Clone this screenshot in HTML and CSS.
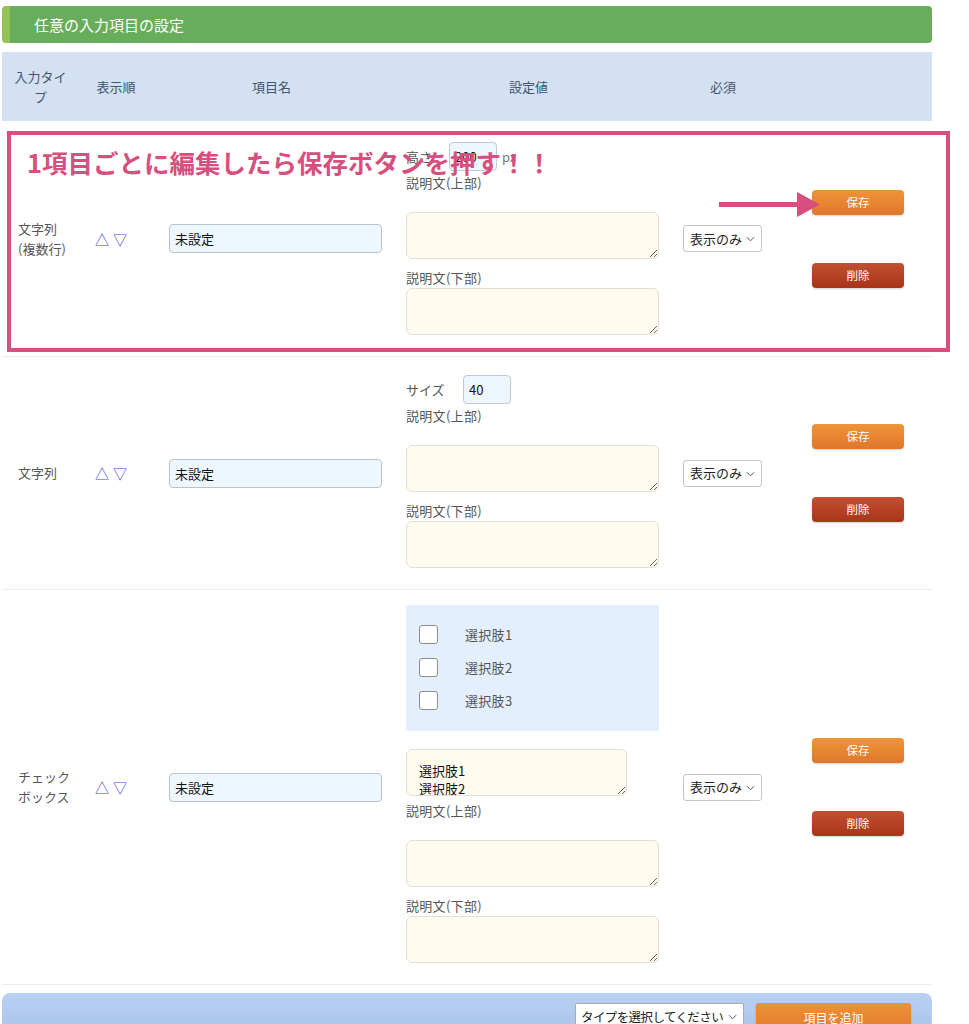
FILE: index.html
```html
<!DOCTYPE html>
<html lang="ja">
<head>
<meta charset="utf-8">
<title>任意の入力項目の設定</title>
<link rel="stylesheet" href="styles.css">
</head>
<body>
<div class="page">
  <h2 class="panel-title">任意の入力項目の設定</h2>

  <div class="field-table">
    <div class="row head">
      <div class="hcell">入力タイプ</div>
      <div class="hcell">表示順</div>
      <div class="hcell">項目名</div>
      <div class="hcell">設定値</div>
      <div class="hcell">必須</div>
      <div class="hcell"></div>
    </div>

    <!-- 文字列(複数行) -->
    <div class="row">
      <div class="cell type">文字列<br>(複数行)</div>
      <div class="cell order"><span class="arrow-btn">△</span><span class="arrow-btn">▽</span></div>
      <div class="cell name"><input class="name-input" type="text" value="未設定"></div>
      <div class="cell settings first">
        <div class="size-line">
          <span class="size-label">高さ</span>
          <input class="num-input" type="text" value="200">
          <span class="unit">px</span>
        </div>
        <div class="desc-label">説明文(上部)</div>
        <textarea class="desc upper"></textarea>
        <div class="desc-label lower">説明文(下部)</div>
        <textarea class="desc"></textarea>
      </div>
      <div class="cell required">
        <span class="select-wrap"><select class="req-select"><option>表示のみ</option></select><svg class="chev" viewBox="0 0 10 6"><path d="M1 1l4 4 4-4" fill="none" stroke="#555" stroke-width="1.1"/></svg></span>
      </div>
      <div class="cell actions">
        <button class="btn save">保存</button>
        <button class="btn delete">削除</button>
      </div>
    </div>

    <!-- 文字列 -->
    <div class="row">
      <div class="cell type">文字列</div>
      <div class="cell order"><span class="arrow-btn">△</span><span class="arrow-btn">▽</span></div>
      <div class="cell name"><input class="name-input" type="text" value="未設定"></div>
      <div class="cell settings">
        <div class="size-line">
          <span class="size-label wide">サイズ</span>
          <input class="num-input" type="text" value="40">
        </div>
        <div class="desc-label">説明文(上部)</div>
        <textarea class="desc upper"></textarea>
        <div class="desc-label lower">説明文(下部)</div>
        <textarea class="desc"></textarea>
      </div>
      <div class="cell required">
        <span class="select-wrap"><select class="req-select"><option>表示のみ</option></select><svg class="chev" viewBox="0 0 10 6"><path d="M1 1l4 4 4-4" fill="none" stroke="#555" stroke-width="1.1"/></svg></span>
      </div>
      <div class="cell actions">
        <button class="btn save">保存</button>
        <button class="btn delete">削除</button>
      </div>
    </div>

    <!-- チェックボックス -->
    <div class="row">
      <div class="cell type">チェック<br>ボックス</div>
      <div class="cell order"><span class="arrow-btn">△</span><span class="arrow-btn">▽</span></div>
      <div class="cell name"><input class="name-input" type="text" value="未設定"></div>
      <div class="cell settings checks">
        <div class="choice-panel">
          <label class="choice"><input type="checkbox"><span>選択肢1</span></label>
          <label class="choice"><input type="checkbox"><span>選択肢2</span></label>
          <label class="choice"><input type="checkbox"><span>選択肢3</span></label>
        </div>
        <textarea class="choices-text">選択肢1
選択肢2
選択肢3</textarea>
        <div class="desc-label after-choices">説明文(上部)</div>
        <textarea class="desc upper"></textarea>
        <div class="desc-label lower">説明文(下部)</div>
        <textarea class="desc"></textarea>
      </div>
      <div class="cell required">
        <span class="select-wrap"><select class="req-select"><option>表示のみ</option></select><svg class="chev" viewBox="0 0 10 6"><path d="M1 1l4 4 4-4" fill="none" stroke="#555" stroke-width="1.1"/></svg></span>
      </div>
      <div class="cell actions">
        <button class="btn save">保存</button>
        <button class="btn delete">削除</button>
      </div>
    </div>
  </div>

  <div class="footer-bar">
    <span class="select-wrap type-wrap"><select class="type-select"><option>タイプを選択してください</option></select><svg class="chev" viewBox="0 0 10 6"><path d="M1 1l4 4 4-4" fill="none" stroke="#555" stroke-width="1.1"/></svg></span>
    <button class="btn add">項目を追加</button>
  </div>

  <!-- editing note drawn over the first row -->
  <div class="note-box">
    <p class="note-text">1項目ごとに編集したら保存ボタンを押す！！</p>
  </div>
  <svg class="note-arrow" viewBox="0 0 108 32" width="108" height="32">
    <rect x="3" y="14" width="80" height="5" fill="#d64f7e"/>
    <polygon points="81,4 104,16.5 81,29" fill="#d64f7e"/>
  </svg>
</div>
</body>
</html>
```

FILE: styles.css
```css
* {
  box-sizing: border-box;
}

body {
  margin: 0;
  background: #fff;
  color: #555;
  font-family: "Noto Sans CJK JP", "Noto Sans", sans-serif;
  font-size: 13px;
  line-height: 20px;
}

.page {
  position: relative;
  width: 932px;
  padding: 6px 0 0 2px;
}

/* section title */
.panel-title {
  margin: 0;
  height: 37px;
  display: flex;
  align-items: center;
  padding-left: 24px;
  background: #67ad5b;
  border-left: 8px solid #93c257;
  border-radius: 4px;
  color: #fff;
  font-size: 15px;
  font-weight: normal;
}

/* field table */
.field-table {
  margin-top: 9px;
}

.row {
  display: grid;
  grid-template-columns: 77px 74px 237px 277px 112px 153px;
  align-items: center;
  border-bottom: 1px solid #ececec;
}

.row.head {
  height: 69px;
  background: #d3e1f3;
  border-bottom: none;
  color: #44546d;
}

.hcell {
  text-align: center;
  padding: 0 8px;
}

.cell {
  padding: 0 16px;
}

.type {
  padding-right: 4px;
  color: #555;
}

.order {
  color: #4343e2;
  font-size: 14px;
  display: flex;
  gap: 4px;
}

.arrow-btn {
  display: inline-block;
  width: 14px;
  text-align: center;
}

.name-input {
  width: 213px;
  height: 29px;
  padding: 0 5px;
  border: 1px solid #b8c3ce;
  border-radius: 4px;
  background: #eff7fe;
  color: #111;
  font: inherit;
  font-size: 13px;
}

/* settings column */
.settings {
  align-self: stretch;
  padding-top: 18px;
  padding-bottom: 21px;
  display: flex;
  flex-direction: column;
  align-items: flex-start;
}

.settings.first {
  padding-top: 21px;
}

.settings.checks {
  padding-top: 15px;
}

.size-line {
  display: flex;
  align-items: center;
  height: 29px;
}

.size-label {
  width: 43px;
}

.size-label.wide {
  width: 57px;
}

.num-input {
  width: 48px;
  height: 29px;
  padding: 0 5px;
  border: 1px solid #bfcad5;
  border-radius: 4px;
  background: #eff7fe;
  color: #111;
  font: inherit;
  font-size: 13px;
}

.unit {
  margin-left: 5px;
  color: #777;
}

.desc-label {
  margin-top: 2px;
  height: 20px;
  letter-spacing: 0.3px;
}

.desc-label.lower {
  margin-top: 9px;
}

.desc-label.after-choices {
  margin-top: 5px;
}

textarea {
  display: block;
  font: inherit;
  resize: both;
  overflow: hidden;
}

.desc {
  width: 253px;
  height: 47px;
  border: 1px solid #e4e1d4;
  border-radius: 6px;
  background: #fffcef;
}

.desc.upper {
  margin-top: 19px;
}

.choice-panel {
  width: 253px;
  padding: 20px 13px 21px;
  background: #e3effc;
  display: flex;
  flex-direction: column;
  gap: 14px;
}

.choice {
  display: flex;
  align-items: center;
  height: 19px;
  color: #555;
  letter-spacing: 0.3px;
}

.choice input {
  appearance: none;
  margin: 0 27px 0 0;
  width: 19px;
  height: 19px;
  border: 1px solid #8c8c8c;
  border-radius: 3px;
  background: #fff;
}

.choices-text {
  margin-top: 18px;
  width: 221px;
  height: 47px;
  padding: 12px 12px;
  border: 1px solid #e4e1d4;
  border-radius: 6px;
  background: #fffcef;
  color: #111;
  line-height: 18px;
}

/* required selector */
.select-wrap {
  position: relative;
  display: inline-block;
}

.req-select {
  appearance: none;
  width: 79px;
  height: 27px;
  padding: 0 0 0 6px;
  border: 1px solid #c6c6c6;
  border-radius: 3px;
  background: #fff;
  color: #222;
  font: inherit;
  font-size: 13px;
}

.chev {
  position: absolute;
  right: 7px;
  top: 11px;
  width: 9px;
  height: 6px;
  pointer-events: none;
}

/* action buttons */
.actions {
  padding-left: 33px;
  display: flex;
  flex-direction: column;
  align-items: flex-start;
  gap: 48px;
}

.btn {
  width: 92px;
  height: 25px;
  border: none;
  border-radius: 4px;
  color: #fff;
  font: inherit;
  font-size: 11.5px;
  line-height: 25px;
  padding: 0;
  box-shadow: 0 1px 2px rgba(0, 0, 0, 0.18);
}

.btn.save {
  background: linear-gradient(#ef9437, #e0772c);
}

.btn.delete {
  background: linear-gradient(#c0502f, #a9341b);
}

/* add-field bar */
.footer-bar {
  margin-top: 8px;
  height: 40px;
  padding: 10px 21px 0 0;
  display: flex;
  justify-content: flex-end;
  align-items: flex-start;
  gap: 12px;
  background: linear-gradient(#b9d1f2, #a9c4eb);
  border-radius: 8px 8px 0 0;
}

.type-select {
  appearance: none;
  width: 169px;
  height: 28px;
  padding: 0 0 0 5px;
  border: 1px solid #aaa;
  border-radius: 2px;
  background: #fff;
  color: #222;
  font: inherit;
  font-size: 12.5px;
  letter-spacing: -0.6px;
}

.btn.add {
  width: 155px;
  height: 28px;
  border-radius: 3px;
  background: linear-gradient(#ee9236, #e27a2d);
  font-size: 12px;
}

/* editing note */
.note-box {
  position: absolute;
  left: 7px;
  top: 131px;
  width: 943px;
  height: 221px;
  border: 4px solid #d64f7e;
  pointer-events: none;
}

.note-text {
  margin: 0;
  padding: 12px 0 0 16px;
  color: #d64f7e;
  font-size: 25.5px;
  line-height: 30px;
  font-weight: bold;
  white-space: nowrap;
}

.note-arrow {
  position: absolute;
  left: 716px;
  top: 188px;
  pointer-events: none;
}
```
